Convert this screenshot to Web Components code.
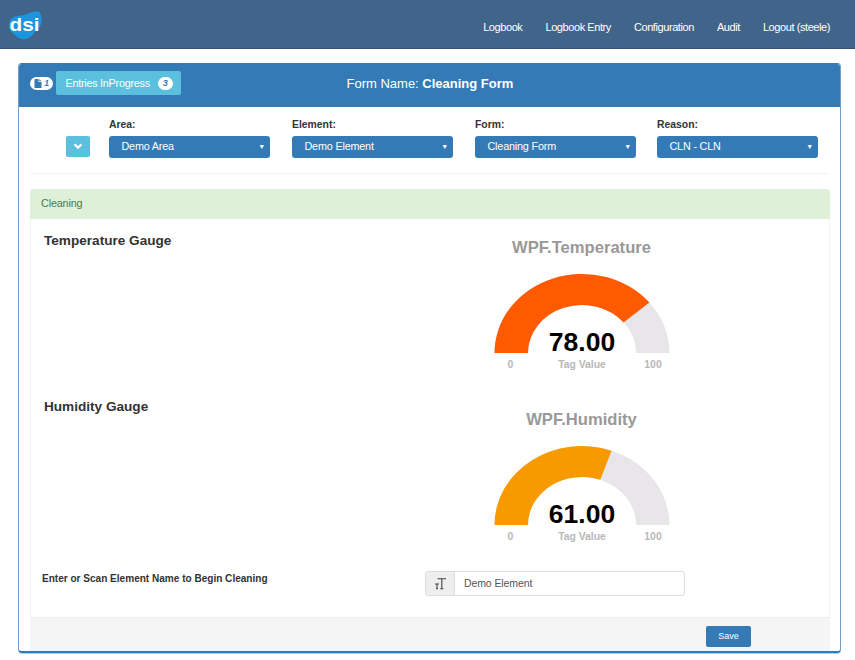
<!DOCTYPE html>
<html><head><meta charset="utf-8"><style>
html,body{margin:0;padding:0;background:#fff;height:660px;overflow:hidden;font-family:"Liberation Sans",Arial,sans-serif;color:#333}
</style></head><body>
<app-nav></app-nav>
<form-panel>
  <filter-bar></filter-bar>
  <cleaning-card></cleaning-card>
</form-panel>
<script>
function def(name, html){
  customElements.define(name, class extends HTMLElement{
    connectedCallback(){ if(this.shadowRoot) return; const s=this.attachShadow({mode:'open'}); s.innerHTML=typeof html==='function'?html(this):html; }
  });
}
def('app-nav',`<style>
:host{display:flex;align-items:center;height:48px;background:#41658a;border-bottom:1.5px solid #37506f;color:#fff;font-size:11px;letter-spacing:-.42px;box-sizing:content-box}
svg{margin-left:8px;flex:none;margin-top:1px}
nav{margin-left:auto;display:flex;gap:23px;padding-right:25px;margin-top:6px}
</style>
<svg width="34" height="32" viewBox="0 0 34 32"><path d="M2 12C4 7 10 7 16 6C23 4 29 0 32 4C35 10 34 17 29 21C25 24 24 29 18 30C11 31 8 27 5 24C1 21 0 17 2 12Z" fill="#1b95e0"/><text x="1.5" y="22" font-family="Liberation Sans" font-size="18.5" font-weight="700" fill="#fff" textLength="30" lengthAdjust="spacingAndGlyphs" letter-spacing="0">dsi</text></svg>
<nav><span>Logbook</span><span>Logbook Entry</span><span>Configuration</span><span>Audit</span><span>Logout (steele)</span></nav>`);

def('form-panel',`<style>
:host{display:block;margin:13.5px 14.5px 0 18px;border:1px solid #6f9fca;border-top-color:#337ab7;border-bottom:2px solid #337ab7;box-shadow:0 1px 0 #a8d3f0;border-radius:4px;height:590px;box-sizing:border-box;overflow:hidden}
header{height:43px;background:#337ab7;color:#fff;display:flex;align-items:center;position:relative;padding-left:11px;padding-bottom:4px;box-sizing:border-box}
.pill{display:flex;align-items:center;gap:2px;background:#fff;color:#337ab7;height:13px;width:23px;border-radius:7px;justify-content:center;font-size:8.5px;font-weight:700;font-style:italic}
.btn{margin-left:3px;background:#5bc0de;color:#fff;height:24px;width:125px;border-radius:2px;display:flex;align-items:center;font-size:10.8px;letter-spacing:-.25px;padding-left:9.5px;box-sizing:border-box}
.count{margin-left:8px;background:#fff;color:#337ab7;width:15px;height:13px;border-radius:7px;font-size:9px;font-weight:700;font-style:italic;letter-spacing:0;display:flex;align-items:center;justify-content:center}
h1{margin:0;font-weight:400;font-size:13px;position:absolute;left:327.5px;top:12px;line-height:16px}
h1 b{font-weight:700}
</style>
<header>
<span class="pill"><svg width="8" height="9" viewBox="0 0 8 9"><path d="M0.5 0H4.5V3H7.5V9H0.5ZM5.2 0L7.5 2.3H5.2Z" fill="#337ab7"/></svg><span>1</span></span>
<span class="btn">Entries InProgress<span class="count">3</span></span>
<h1>Form Name: <b>Cleaning Form</b></h1>
</header>
<slot></slot>`);

def('filter-bar',`<style>
:host{display:block;margin:0 11px;height:66px;border-bottom:1px solid #f2f2f2;box-sizing:content-box;position:relative}
.row{display:flex;padding-left:35.5px;padding-top:11px;align-items:flex-end}
.toggle{width:24.5px;height:21px;background:#5bc0de;border-radius:2px;display:flex;align-items:center;justify-content:center;margin-right:19px;margin-bottom:1px}
.fields{display:flex;gap:22px}
</style>
<div class="row"><span class="toggle"><svg width="10" height="7" viewBox="0 0 10 7"><path d="M1.5 1.2L5 4.7L8.5 1.2" fill="none" stroke="#fff" stroke-width="2.2"/></svg></span>
<div class="fields">
<pick-field label="Area:" value="Demo Area"></pick-field>
<pick-field label="Element:" value="Demo Element"></pick-field>
<pick-field label="Form:" value="Cleaning Form"></pick-field>
<pick-field label="Reason:" value="CLN - CLN" style="margin-left:-1px"></pick-field>
</div></div>`);

def('pick-field',el=>`<style>
:host{display:block;width:161px}
label{display:block;font-size:10.4px;font-weight:700;color:#333;line-height:13px;margin-bottom:5px}
.sel{height:22px;box-sizing:border-box;padding:0 5px 1px 12.5px;background:#337ab7;border-radius:3px;color:#fff;font-size:10.8px;letter-spacing:-.18px;display:flex;align-items:center;justify-content:space-between}
i{font-style:normal;font-size:7px}
</style><label>${el.getAttribute('label')}</label><div class="sel"><span>${el.getAttribute('value')}</span><i>▼</i></div>`);

def('cleaning-card',`<style>
:host{display:block;margin:15px 10px 0 11px;border:1px solid #f0f4ec;border-bottom:0;border-radius:4px 4px 0 0;height:462px;position:relative;box-sizing:border-box}
.head{height:30px;box-sizing:border-box;padding:0 0 2px 11px;background:#dff0d8;color:#4a7a4a;font-size:10.8px;letter-spacing:-.15px;display:flex;align-items:center;margin:-1px -1px 0;border-radius:4px 4px 0 0}
.sect{display:grid;grid-template-columns:395px 1fr}
h3{margin:0;font-size:13.6px;line-height:16px;color:#333;font-weight:700}
.scan{display:flex;align-items:center;margin-top:4px}
.lab{font-size:10.05px;font-weight:700;color:#333;width:394px;padding:0 0 10px 11px;box-sizing:border-box}
.group{display:flex;width:260px;height:25px;border:1px solid #ddd;border-radius:3px;box-sizing:border-box;font-size:10.5px;letter-spacing:-.1px;color:#555}
.add{width:29px;background:#eee;border-right:1px solid #ddd;display:flex;align-items:center;justify-content:center;box-sizing:border-box;border-radius:2px 0 0 2px}
.val{padding-left:9px;display:flex;align-items:center}
footer{position:absolute;left:-1px;right:-1px;bottom:0;height:34px;background:#f5f5f5;border-top:1px solid #eee;box-sizing:border-box}
.save{position:absolute;left:676px;top:8px;width:45px;height:21px;background:#337ab7;color:#fff;font-size:9px;border-radius:2px;display:flex;align-items:center;justify-content:center}
</style>
<div class="head">Cleaning</div>
<div class="sect" style="height:166px"><h3 style="padding:14px 0 0 13px">Temperature Gauge</h3><tag-gauge title="WPF.Temperature" value="78" color="#ff5a00" top="19"></tag-gauge></div>
<div class="sect" style="height:182px"><h3 style="padding:14px 0 0 13px">Humidity Gauge</h3><tag-gauge title="WPF.Humidity" value="61" color="#f79a00" top="25.5"></tag-gauge></div>
<div class="scan"><span class="lab">Enter or Scan Element Name to Begin Cleaning</span>
<div class="group"><span class="add"><svg width="13" height="13" viewBox="0 0 13 13"><path d="M3.5 1.8H12M7.8 1.8V11.8M6.2 11.8H9.4M1 7H5M3 7V11.8M2 11.8H4" fill="none" stroke="#444" stroke-width="1.1"/></svg></span><span class="val">Demo Element</span></div></div>
<footer><span class="save">Save</span></footer>`);

def('tag-gauge',el=>{
  const v=+el.getAttribute('value'),top=+el.getAttribute('top');
  const cx=99,cy=95,RX=87.5,RY=79,rx=54,ry=48;
  const a=Math.PI*(1-v/100),c=Math.cos(a),s=Math.sin(a);
  const p=(x,y)=>x.toFixed(1)+' '+y.toFixed(1);
  const full=`M${cx-RX} ${cy}A${RX} ${RY} 0 0 1 ${cx+RX} ${cy}H${cx+rx}A${rx} ${ry} 0 0 0 ${cx-rx} ${cy}Z`;
  const val=`M${cx-RX} ${cy}A${RX} ${RY} 0 0 1 ${p(cx+RX*c,cy-RY*s)}L${p(cx+rx*c,cy-ry*s)}A${rx} ${ry} 0 0 0 ${cx-rx} ${cy}Z`;
  return `<style>
:host{display:block;padding-top:${top}px}
.t{width:198px;margin-left:56.5px;text-align:center;font-size:16.6px;font-weight:700;color:#999;line-height:20px;white-space:nowrap}
svg{display:block;margin-left:56.5px}
</style>
<div class="t">${el.getAttribute('title')}</div>
<svg width="198" height="125" viewBox="0 0 198 125">
<path d="${full}" fill="#e8e6e8"/><path d="${val}" fill="${el.getAttribute('color')}"/>
<text x="${cx}" y="${cy-2}" text-anchor="middle" font-family="Liberation Sans" font-size="26.5" font-weight="700" fill="#000">${v.toFixed(2)}</text>
<text x="${cx-71.5}" y="${cy+15}" text-anchor="middle" font-family="Liberation Sans" font-size="10.4" font-weight="700" fill="#b8b8b8">0</text>
<text x="${cx}" y="${cy+15}" text-anchor="middle" font-family="Liberation Sans" font-size="10.4" font-weight="700" fill="#b8b8b8">Tag Value</text>
<text x="${cx+71}" y="${cy+15}" text-anchor="middle" font-family="Liberation Sans" font-size="10.4" font-weight="700" fill="#b8b8b8">100</text>
</svg>`;
});
</script>
</body></html>
